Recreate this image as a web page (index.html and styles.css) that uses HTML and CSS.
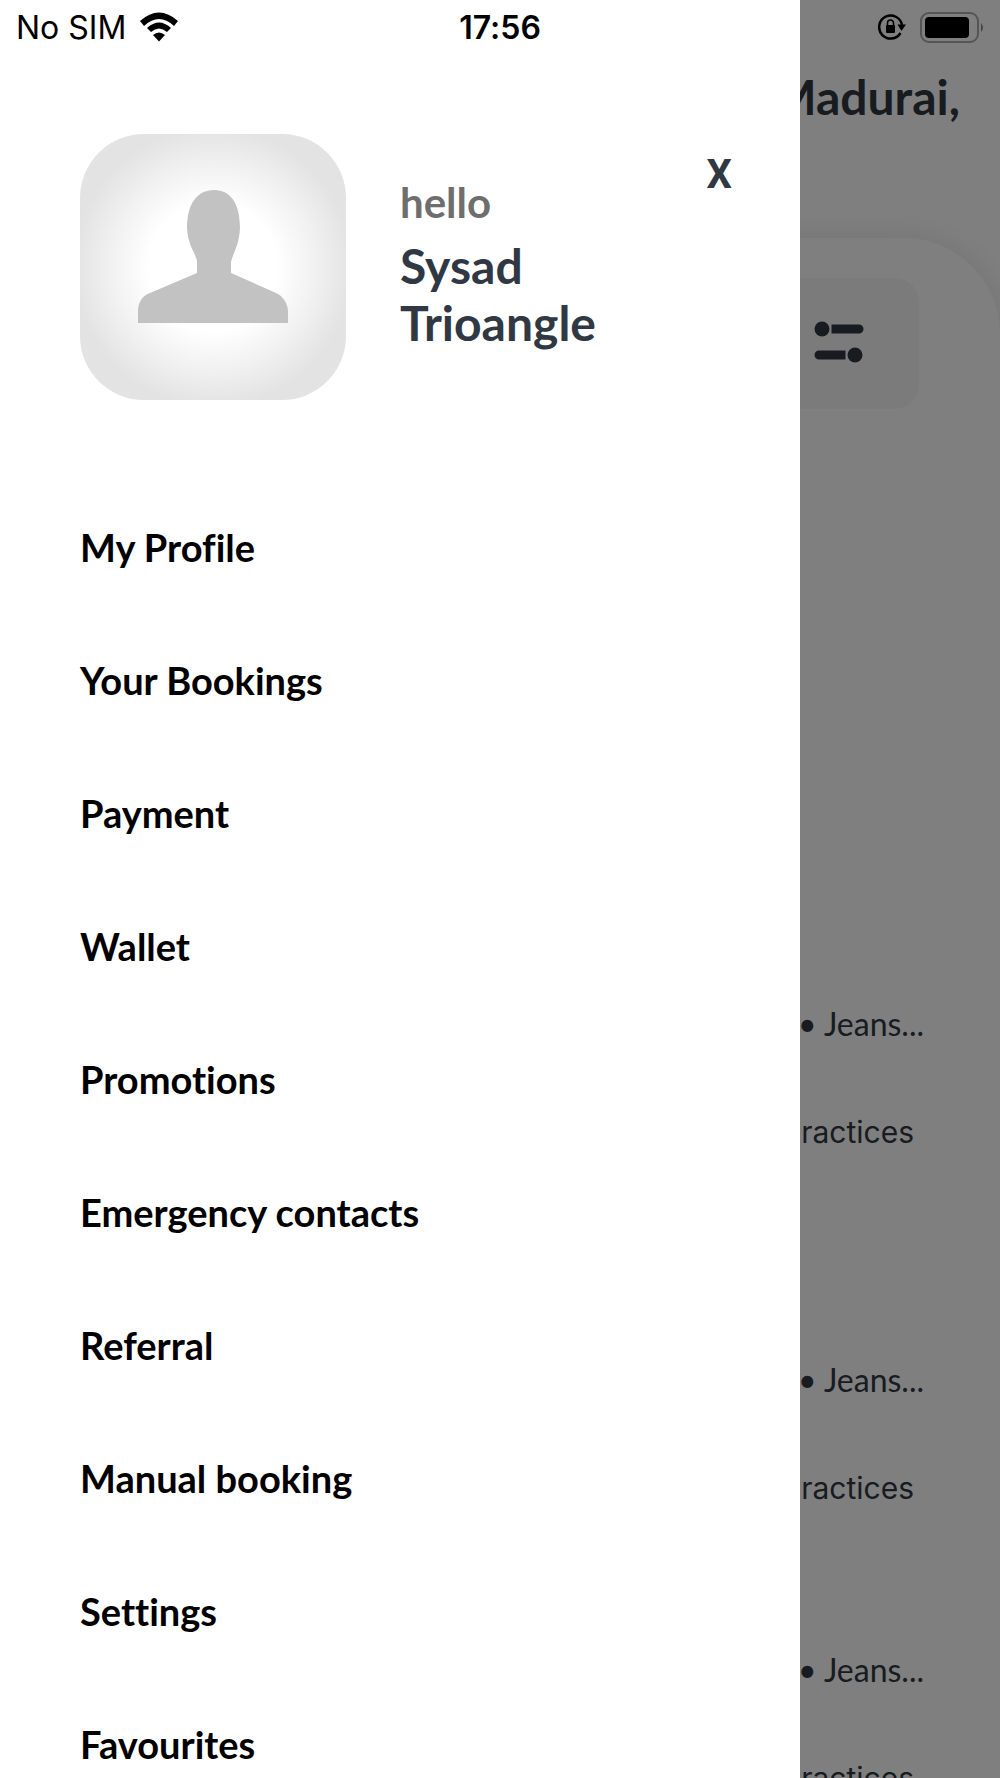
FILE: index.html
```html
<!DOCTYPE html>
<html lang="en">

<head>
    <meta charset="UTF-8">
    <meta name="viewport" content="width=device-width, initial-scale=1.0">
    <title>Menu</title>
    <link rel="stylesheet" href="styles.css">
</head>

<body>
    <div class="screen">
        <!-- Home page behind the drawer -->
        <main class="home">
            <h1 class="location">Madurai,</h1>
            <section class="sheet">
                <div class="search">
                    <button type="button" class="filter" aria-label="Filter">
                        <svg width="50" height="42" viewBox="0 0 50 42">
                            <circle cx="8" cy="8" r="7.5" />
                            <path d="M17.500 3.500H45a4.500 4.500 0 0 1 0 9H17.500z" />
                            <circle cx="41" cy="34" r="7.500" />
                            <path d="M31.500 29.500H5a4.500 4.500 0 0 0 0 9H31.500z" />
                        </svg>
                    </button>
                </div>
                <div class="stores">
                    <article class="store">
                        <p class="tags">• Jeans...</p>
                        <p class="note">Practices</p>
                    </article>
                    <article class="store store-short">
                        <p class="tags">• Jeans...</p>
                        <p class="note">Practices</p>
                    </article>
                    <article class="store">
                        <p class="tags">• Jeans...</p>
                        <p class="note">Practices</p>
                    </article>
                </div>
            </section>
        </main>
        <div class="overlay"></div>

        <aside class="drawer">
            <div class="profile">
                <div class="avatar">
                    <svg width="150" height="133" viewBox="0 0 150 133">
                        <path d="M0 133V121C0 112 5 105 12 103L59 83V71C58 64 50 56 49 38C49 14 59 0 76 0C93 0 102 14 102 38C101 56 95 63 93 72V83L138 103C145 106 150 114 150 121V133z" />
                    </svg>
                </div>
                <div class="user">
                    <p class="hello">hello</p>
                    <h2 class="name">Sysad Trioangle</h2>
                </div>
                <button type="button" class="close">X</button>
            </div>
            <nav>
                <ul class="menu">
                    <li><a href="#">My Profile</a></li>
                    <li><a href="#">Your Bookings</a></li>
                    <li><a href="#">Payment</a></li>
                    <li><a href="#">Wallet</a></li>
                    <li><a href="#">Promotions</a></li>
                    <li><a href="#">Emergency contacts</a></li>
                    <li><a href="#">Referral</a></li>
                    <li><a href="#">Manual booking</a></li>
                    <li><a href="#">Settings</a></li>
                    <li><a href="#">Favourites</a></li>
                </ul>
            </nav>
        </aside>

        <header class="status-bar">
            <div class="status-left">
                <span>No SIM</span>
                <svg width="38" height="30" viewBox="0 0 38 30">
                    <path d="M0 9Q19 -8 38 9L34 14Q19 0 4 14z" />
                    <path d="M7 16Q19 5 31 16L27 20Q19 13 11 20z" />
                    <path d="M13 23Q19 18 25 23L19 29.500z" />
                </svg>
            </div>
            <time class="clock">17:56</time>
            <div class="status-right">
                <svg width="28" height="28" viewBox="0 0 28 28">
                    <path d="M24 12A11.500 11.500 0 1 0 22.500 20" fill="none" stroke="#000" stroke-width="2.500" />
                    <path d="M19.500 11.500H28L23.500 18z" />
                    <rect x="8" y="12" width="9" height="8" rx="1" />
                    <path d="M9.500 12.500V10a3 3 0 0 1 6 0V12.500" fill="none" stroke="#000" stroke-width="1.500" />
                </svg>
                <svg width="64" height="31" viewBox="0 0 64 31">
                    <rect x="1" y="1" width="57" height="29" rx="8" fill="none" stroke="#555" stroke-width="2" />
                    <rect x="5" y="5" width="44" height="21" rx="4" />
                    <path d="M61 11Q65 15.500 61 20z" fill="#444" />
                </svg>
            </div>
        </header>
    </div>
</body>

</html>
```
FILE: styles.css
```css
* {
    box-sizing: border-box;
}

body,
h1,
h2,
p,
ul {
    margin: 0;
    padding: 0;
}

body {
    font-family: Lato, sans-serif;
    font-variant-ligatures: none;
    color: #303943;
}

svg {
    display: block;
}

button {
    padding: 0;
    border: 0;
    background: none;
    color: inherit;
}

.screen {
    position: relative;
    height: 100vh;
    overflow: hidden;
    background: #fff;
}

/* status bar */
.status-bar {
    position: absolute;
    top: 0;
    left: 0;
    right: 0;
    display: grid;
    grid-template-columns: 1fr auto 1fr;
    align-items: center;
    height: 54px;
    padding: 0 16px;
    font-family: Inter, sans-serif;
    font-size: 32px;
    color: #000;
}

.status-left,
.status-right {
    display: flex;
    align-items: center;
    gap: 14px;
}

.status-right {
    justify-content: flex-end;
}

.clock {
    font-weight: 600;
}

/* home */
.home {
    padding-top: 68px;
    text-align: right;
}

.location {
    padding-right: 40px;
    font-size: 48px;
    line-height: 58px;
}

.sheet {
    margin-top: 112px;
    padding-top: 40px;
    border-radius: 0 96px 0 0;
    box-shadow: 0 0 32px rgba(0, 0, 0, 0.1);
}

.search {
    display: flex;
    align-items: center;
    justify-content: flex-end;
    height: 131px;
    margin-right: 81px;
    padding: 0 55px 4px 0;
    border-radius: 24px;
    background: #f6f6f6;
}

.filter {
    fill: #303943;
}

.stores {
    padding: 595px 76px 0 0;
}

.store {
    height: 356px;
    font-size: 32px;
    line-height: 40px;
}

.store-short {
    height: 290px;
}

.note {
    margin-top: 68px;
    padding-right: 10px;
    font-family: Inter, sans-serif;
    font-size: 30px;
}

.overlay {
    position: absolute;
    inset: 0;
    background: rgba(0, 0, 0, 0.5);
}

/* drawer */
.drawer {
    position: absolute;
    top: 0;
    bottom: 0;
    left: 0;
    width: 80%;
    padding: 134px 68px 0 80px;
    background: #fff;
    overflow: hidden;
}

.profile {
    display: flex;
    align-items: flex-start;
}

.avatar {
    display: flex;
    flex-shrink: 0;
    justify-content: center;
    width: 266px;
    height: 266px;
    padding-top: 56px;
    border-radius: 64px;
    background: radial-gradient(circle, #fff 34%, #f0f0f0 56%, #e3e3e3 74%);
    fill: #c2c2c2;
}

.user {
    flex: 1;
    padding: 42px 0 0 54px;
}

.hello {
    font-size: 42px;
    font-weight: bold;
    line-height: 52px;
    color: #6e6e6e;
}

.name {
    margin-top: 9px;
    font-size: 48px;
    line-height: 57px;
}

.close {
    margin-top: 17px;
    font: bold 40px/48px Roboto, sans-serif;
}

.menu {
    margin-top: 80px;
    list-style: none;
}

.menu li {
    display: flex;
    align-items: center;
    height: 133px;
}

.menu a {
    font-size: 38px;
    font-weight: bold;
    color: #000;
    text-decoration: none;
}
```
